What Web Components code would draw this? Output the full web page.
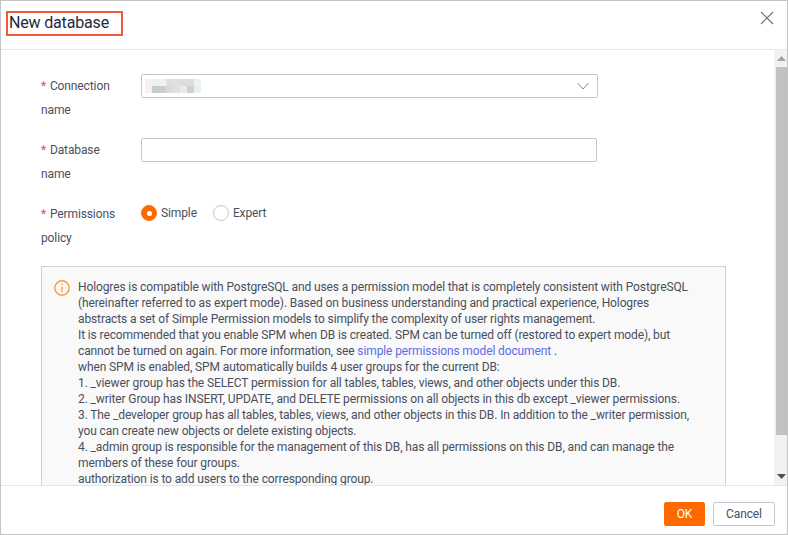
<!DOCTYPE html>
<html><head><meta charset="utf-8">
<style>
html,body{margin:0;padding:0;width:788px;height:535px;overflow:hidden;background:#fff;font-family:Roboto,"Liberation Sans",sans-serif;font-size:12px;color:#333;letter-spacing:-.115px}
</style></head><body>
<db-dialog>
  <span slot="title">New database</span>
  <form-row label="Connection" label2="name"><db-select></db-select></form-row>
  <form-row label="Database" label2="name"><db-input></db-input></form-row>
  <form-row label="Permissions" label2="policy">
    <db-radio checked>Simple</db-radio><db-radio>Expert</db-radio>
  </form-row>
  <db-alert>Hologres is compatible with PostgreSQL and uses a permission model that is completely consistent with PostgreSQL<br>(hereinafter referred to as expert mode). Based on business understanding and practical experience, Hologres<br>abstracts a set of Simple Permission models to simplify the complexity of user rights management.<br>It is recommended that you enable SPM when DB is created. SPM can be turned off (restored to expert mode), but<br>cannot be turned on again. For more information, see <a>simple permissions model document</a> .<br>when SPM is enabled, SPM automatically builds 4 user groups for the current DB:<br>1. _viewer group has the SELECT permission for all tables, tables, views, and other objects under this DB.<br>2. _writer Group has INSERT, UPDATE, and DELETE permissions on all objects in this db except _viewer permissions.<br>3. The _developer group has all tables, tables, views, and other objects in this DB. In addition to the _writer permission,<br>you can create new objects or delete existing objects.<br>4. _admin group is responsible for the management of this DB, has all permissions on this DB, and can manage the<br>members of these four groups.<br>authorization is to add users to the corresponding group.</db-alert>
  <db-button slot="footer" primary>OK</db-button>
  <db-button slot="footer">Cancel</db-button>
</db-dialog>
<script>
const def=(n,html)=>customElements.define(n,class extends HTMLElement{
  constructor(){super();this.attachShadow({mode:'open'}).innerHTML=html(this)}
});
def('db-dialog',()=>`<style>
:host{display:flex;flex-direction:column;box-sizing:border-box;width:788px;height:535px;border:1px solid #c4c4c4;background:#fff}
.head{flex:none;height:48px;border-bottom:1px solid #e6e6e6;display:flex;justify-content:space-between;align-items:flex-start}
.title{margin:10px 0 0 5px;box-sizing:border-box;width:117px;height:25px;border:2px solid #f0593a;padding-left:1px;font-size:16px;line-height:19px;color:#1f2a3a;letter-spacing:-.17px;white-space:nowrap}
.x{margin:10px 13px 0 0;width:14px;height:14px;display:block}
.mid{flex:1;min-height:0;display:flex}
.scroll{flex:1;min-width:0;overflow:hidden;padding:24px 0 0 40px;box-sizing:border-box}
.bar{flex:none;width:13px;background:#f1f1f1;display:flex;flex-direction:column}
.arrow{height:17px;flex:none;display:flex;align-items:center;justify-content:center;padding-left:2px}
.thumb{height:368px;flex:none;background:#c1c1c1;margin-left:2px}
.fill{flex:1}
.foot{flex:none;height:49px;border-top:1px solid #e6e6e6;display:flex;justify-content:flex-end;align-items:flex-start;gap:8px;padding:16px 12px 0 0;box-sizing:border-box}
</style>
<div class="head"><div class="title"><slot name="title"></slot></div>
<svg class="x" viewBox="0 0 14 14"><path d="M1 1L13 13M13 1L1 13" stroke="#5f7286" stroke-width="1.1" fill="none"/></svg></div>
<div class="mid"><div class="scroll"><slot></slot></div>
<div class="bar"><div class="arrow"><svg width="9" height="5" viewBox="0 0 9 5"><path d="M4.5 0L9 5H0z" fill="#a3a3a3"/></svg></div><div class="thumb"></div><div class="fill"></div><div class="arrow"><svg width="9" height="5" viewBox="0 0 9 5"><path d="M4.5 5L9 0H0z" fill="#505050"/></svg></div></div></div>
<div class="foot"><slot name="footer"></slot></div>`);
def('form-row',h=>`<style>
:host{display:flex;margin-bottom:16px;width:557px}
.l{flex:none;width:100px;line-height:24px;color:#4a4f5c}
.s{color:#f5464f;margin-right:1px}
.c{flex:1;display:flex;height:24px;align-items:flex-start}
</style><div class="l"><span class="s">*</span> ${h.getAttribute('label')}<br>${h.getAttribute('label2')}</div><div class="c"><slot></slot></div>`);
const blur=['#f3f3f3','#eef0f0','#eef2f4','#dedfde','#e0e0df','#dcdcdc','#dcdcdc','#eef1f3',
'#f9f1ec','#c8cccc','#cccfd0','#d8dadb','#e0e0e0','#eaeaea','#cdd0d2','#e9eef0'];
def('db-select',()=>`<style>
:host{display:flex;box-sizing:border-box;width:457px;height:24px;border:1px solid #c4c6cf;border-radius:2px;background:#fff;align-items:center;justify-content:space-between;padding:0 8px 0 3px}
.b{display:grid;grid-template-columns:repeat(8,7px);grid-auto-rows:7px}
</style><div class="b">${blur.map(c=>`<i style="background:${c}"></i>`).join('')}</div>
<svg width="12" height="8" viewBox="0 0 12 8"><path d="M.5 1L6 7L11.5 1" stroke="#8a8d94" fill="none"/></svg>`);
def('db-input',()=>`<style>:host{display:block;box-sizing:border-box;width:456px;height:24px;border:1px solid #c4c6cf;border-radius:2px;background:#fff}</style>`);
def('db-radio',h=>`<style>
:host{display:flex;align-items:center;height:22px;margin-right:16px;color:#4a4f5c;line-height:22px}
.r{box-sizing:border-box;width:16px;height:16px;border-radius:50%;border:1px solid #c4c6cf;margin-right:4px;background:#fff;display:flex;align-items:center;justify-content:center}
:host([checked]) .r{background:#ff6a00;border-color:#ff6a00}
:host([checked]) .r::after{content:"";width:5px;height:5px;border-radius:50%;background:#fff}
</style><span class="r"></span><slot></slot>`);
def('db-alert',()=>`<style>
:host{display:flex;box-sizing:border-box;width:685px;margin-top:8px;border:1px solid #d0d0d0;background:#f9f9f9;padding:12px 0 12px 12px;color:#4a4f5c;line-height:16px;white-space:nowrap}
svg{flex:none;margin-right:8px;margin-top:1px}
::slotted(a){color:#5c6bea}
</style><svg width="16" height="16" viewBox="0 0 16 16"><circle cx="8" cy="8" r="7.2" fill="none" stroke="#ff9a2e" stroke-width="1.4"/><path d="M8 3.6v1.5M8 6.6v5.6" stroke="#ff9a2e" stroke-width="1.3" fill="none"/></svg><div><slot></slot></div>`);
def('db-button',h=>`<style>
:host{display:flex;box-sizing:border-box;height:24px;align-items:center;justify-content:center;border-radius:2px;border:1px solid #c4c6cf;background:#fff;color:#4a4f5c;width:62px}
:host([primary]){background:#ff6a00;border-color:#ff6a00;color:#fff;width:41px}
</style><slot></slot>`);
</script>
</body></html>
